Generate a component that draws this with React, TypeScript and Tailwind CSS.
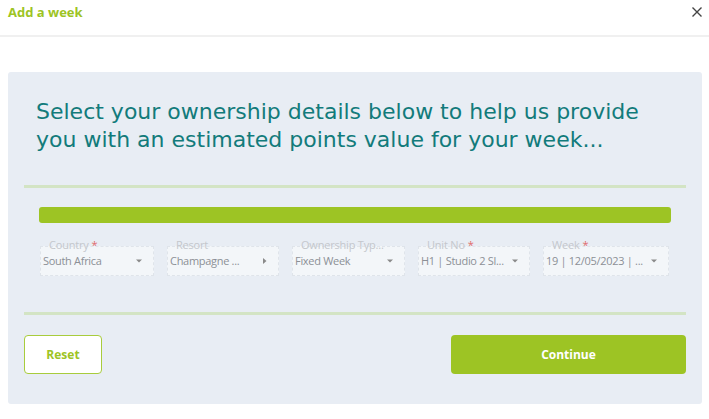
import React from "react";

const fields = [
  { label: "Country", req: true, value: "South Africa", w: "w-[114px]", caret: "down" },
  { label: "Resort", req: false, value: "Champagne ...", w: "w-[112px]", caret: "right" },
  { label: "Ownership Typ...", req: false, value: "Fixed Week", w: "w-[113px]", caret: "down" },
  { label: "Unit No", req: true, value: "H1 | Studio 2 Sl...", w: "w-[112px]", caret: "down" },
  { label: "Week", req: true, value: "19 | 12/05/2023 | ...", w: "w-[126px]", caret: "down" },
];

function Caret({ dir }: { dir: string }) {
  if (dir === "right") {
    return (
      <svg width="6" height="8" viewBox="0 0 6 8" className="shrink-0">
        <path d="M1 1 L4.5 4 L1 7 Z" fill="#8a8a8a" />
      </svg>
    );
  }
  return (
    <svg width="8" height="6" viewBox="0 0 8 6" className="shrink-0">
      <path d="M1 1.5 L7 1.5 L4 4.5 Z" fill="#8a8a8a" />
    </svg>
  );
}

export default function App() {
  return (
    <div className="w-[709px] h-[419px] bg-white relative overflow-hidden" style={{ fontFamily: "'Open Sans', 'Noto Sans', sans-serif" }}>
      <div className="h-[35px] flex items-start justify-between pl-2 pr-[6px] pt-[2px]">
        <span className="text-[13px] font-bold text-[#9dc424] leading-[20px]">Add a week</span>
        <svg width="12" height="12" viewBox="0 0 12 12" className="mt-[4px]">
          <path d="M1.5 1.5 L10.5 10.5 M10.5 1.5 L1.5 10.5" stroke="#444" strokeWidth="1.4" />
        </svg>
      </div>
      <div className="h-[2px] bg-[#f0f0f0]" />
      <div className="ml-2 mt-[35px] w-[694px] h-[332px] bg-[#e8edf4] rounded-[3px] px-4 pt-[26px]">
        <div
          className="ml-3 text-[22px] leading-[28px] text-[#127b7b]"
          style={{ fontFamily: "'DejaVu Sans', Verdana, sans-serif" }}
        >
          Select your ownership details below to help us provide
          <br />
          you with an estimated points value for your week...
        </div>
        <div className="mt-[31px] h-[3px] bg-[#d3e4c4]" />
        <div className="mx-[15px] mt-[19px] h-[16px] rounded-[3px] bg-[#9dc424]" />
        <div className="flex pl-[16px] mt-[23px]">
          {fields.map((f, i) => (
            <div
              key={i}
              className={`${f.w} h-[30px] relative border border-dashed border-[#dfe4ea] bg-[#f3f6f9] flex items-center pl-[2px] pr-[10px] ${i > 0 ? "ml-[13px]" : ""}`}
            >
              <span className="absolute left-[8px] top-[-9px] text-[11px] leading-[14px] text-[#c4c7cc] whitespace-nowrap tracking-[-0.2px]">
                {f.label}
                {f.req && <span className="text-[#e06b6b] ml-[3px]">*</span>}
              </span>
              <span className="flex-1 text-[11px] text-[#8c9096] whitespace-nowrap mt-[1px] tracking-[-0.3px]">{f.value}</span>
              <Caret dir={f.caret} />
            </div>
          ))}
        </div>
        <div className="mt-[36px] h-[3px] bg-[#d3e4c4]" />
        <div className="flex justify-between mt-[20px]">
          <button className="w-[78px] h-[39px] bg-white border border-[#a8cc3c] rounded-[4px] text-[12px] font-bold text-[#9dc424]">
            Reset
          </button>
          <button className="w-[235px] h-[39px] bg-[#9dc424] rounded-[4px] text-[12px] font-bold text-white">
            Continue
          </button>
        </div>
      </div>
    </div>
  );
}
